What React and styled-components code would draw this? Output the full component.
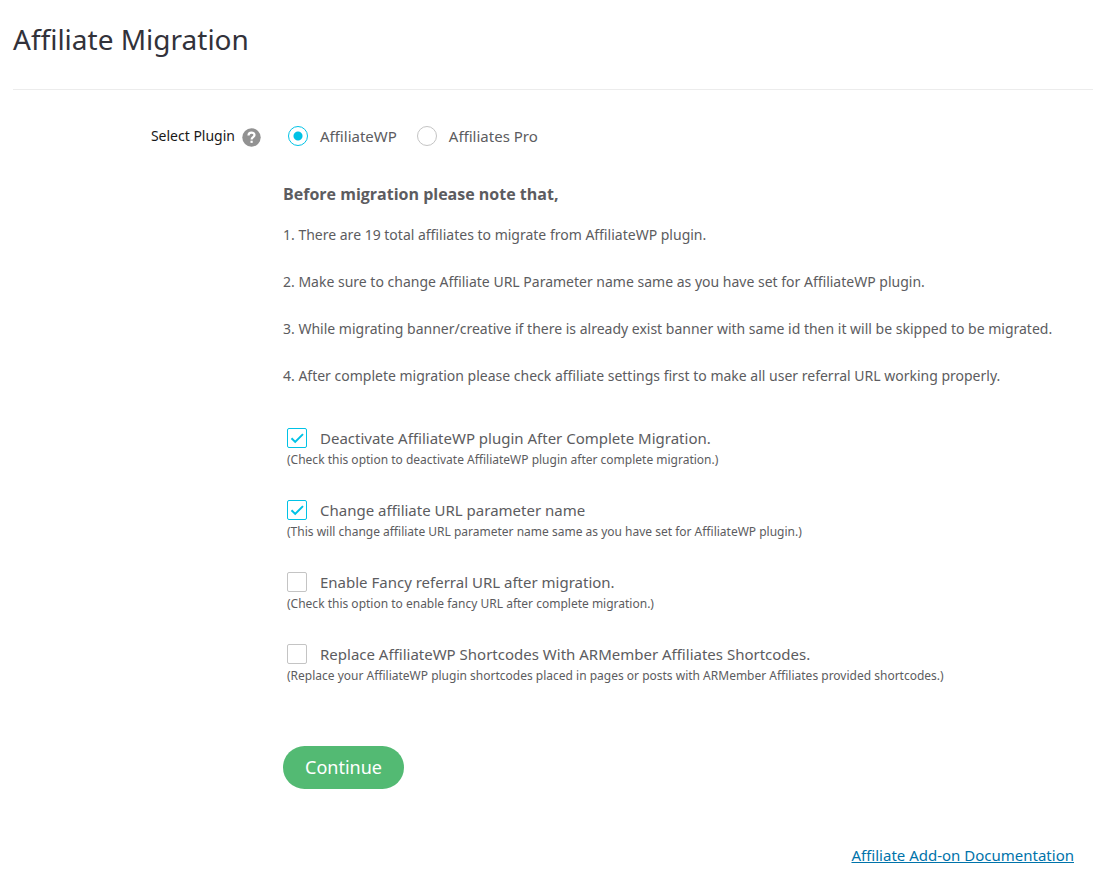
import React, { useState } from "react";
import styled, { createGlobalStyle } from "styled-components";

const GlobalStyle = createGlobalStyle`
  *, *::before, *::after { box-sizing: border-box; }
  body {
    margin: 0;
    background: #fff;
    color: #5c5c60;
    font-family: "Noto Sans", sans-serif;
    font-size: 14px;
  }
`;

const Page = styled.main`
  padding: 0 0 0 13px;
`;

const Header = styled.header`
  height: 90px;
  padding-top: 19px;
  border-bottom: 1px solid #ececec;
`;

const Title = styled.h1`
  margin: 0;
  color: #32323a;
  font-size: 28px;
  font-weight: 400;
  line-height: 40px;
`;

const Form = styled.form`
  display: grid;
  grid-template-columns: 248px 1fr;
  column-gap: 22px;
  padding-top: 32px;
`;

const FieldLabel = styled.div`
  display: flex;
  justify-content: flex-end;
  align-items: center;
  gap: 7px;
  height: 26px;
  color: #191818;
`;

const HelpIcon = styled.svg`
  width: 19px;
  height: 19px;
  margin-top: 4px;
`;

const Fields = styled.div`
  min-width: 0;
`;

const RadioGroup = styled.div`
  display: flex;
  align-items: center;
  gap: 20px;
  height: 28px;
  padding-left: 5px;
`;

const RadioLabel = styled.label`
  display: flex;
  align-items: center;
  gap: 12px;
  font-size: 15px;
  line-height: 28px;
`;

const Radio = styled.input`
  appearance: none;
  width: 20px;
  height: 20px;
  margin: 0;
  border: 1px solid #c4c4c4;
  border-radius: 50%;
  &:checked {
    border-color: #00c2e6;
    background: radial-gradient(circle, #00c2e6 4px, transparent 5px);
  }
`;

const NoteTitle = styled.h2`
  margin: 30px 0 0;
  font-family: "Open Sans", sans-serif;
  font-size: 16px;
  font-weight: 700;
  line-height: 28px;
`;

const Notes = styled.div`
  display: grid;
  gap: 23px;
  margin-top: 15px;
`;

const Note = styled.p`
  margin: 0;
  line-height: 24px;
`;

const Options = styled.div`
  display: grid;
  gap: 28px;
  margin-top: 38px;
  padding-left: 4px;
`;

const Option = styled.div`
  display: grid;
`;

const OptionLabel = styled.label`
  display: flex;
  align-items: center;
  gap: 13px;
  font-size: 15px;
  line-height: 24px;
`;

const CheckBox = styled.span`
  display: grid;
  flex: none;
  width: 20px;
  height: 20px;
  > * { grid-area: 1 / 1; }
`;

const CheckInput = styled.input`
  appearance: none;
  width: 20px;
  height: 20px;
  margin: 0;
  border: 1px solid #c4c4c4;
  border-radius: 2px;
  &:checked { border-color: #00c2e6; }
`;

const Tick = styled.svg`
  width: 20px;
  height: 20px;
  pointer-events: none;
`;

const Hint = styled.span`
  font-size: 12px;
  line-height: 20px;
`;

const ContinueButton = styled.button`
  display: block;
  margin-top: 60px;
  padding: 0 22px;
  height: 43px;
  border: 0;
  border-radius: 22px;
  background: #53ba73;
  color: #fff;
  font: 400 18px/43px "Noto Sans", sans-serif;
`;

const Footer = styled.footer`
  display: flex;
  justify-content: flex-end;
  margin-top: 54px;
  padding-right: 19px;
`;

const DocLink = styled.a`
  color: #0073aa;
  font-size: 15px;
  line-height: 24px;
`;

const notes = [
  "1. There are 19 total affiliates to migrate from AffiliateWP plugin.",
  "2. Make sure to change Affiliate URL Parameter name same as you have set for AffiliateWP plugin.",
  "3. While migrating banner/creative if there is already exist banner with same id then it will be skipped to be migrated.",
  "4. After complete migration please check affiliate settings first to make all user referral URL working properly.",
];

const options = [
  { id: "deactivate", label: "Deactivate AffiliateWP plugin After Complete Migration.", hint: "(Check this option to deactivate AffiliateWP plugin after complete migration.)", on: true },
  { id: "parameter", label: "Change affiliate URL parameter name", hint: "(This will change affiliate URL parameter name same as you have set for AffiliateWP plugin.)", on: true },
  { id: "fancy", label: "Enable Fancy referral URL after migration.", hint: "(Check this option to enable fancy URL after complete migration.)", on: false },
  { id: "shortcodes", label: "Replace AffiliateWP Shortcodes With ARMember Affiliates Shortcodes.", hint: "(Replace your AffiliateWP plugin shortcodes placed in pages or posts with ARMember Affiliates provided shortcodes.)", on: false },
];

function MigrationOption({ id, label, hint, on }) {
  const [checked, setChecked] = useState(on);
  return (
    <Option>
      <OptionLabel htmlFor={id}>
        <CheckBox>
          <CheckInput id={id} type="checkbox" checked={checked} aria-describedby={id + "-hint"} onChange={(e) => setChecked(e.target.checked)} />
          {checked && (
            <Tick viewBox="0 0 20 20" aria-hidden="true">
              <path d="M4.5 10.3l3.7 3.6 7.8-7.8" fill="none" stroke="#00c2e6" strokeWidth="2" />
            </Tick>
          )}
        </CheckBox>
        {label}
      </OptionLabel>
      <Hint id={id + "-hint"}>{hint}</Hint>
    </Option>
  );
}

export default function App() {
  const [plugin, setPlugin] = useState("AffiliateWP");
  return (
    <>
      <GlobalStyle />
      <Page>
        <Header>
          <Title>Affiliate Migration</Title>
        </Header>
        <Form onSubmit={(e) => e.preventDefault()}>
          <FieldLabel>
            <span id="plugin-label">Select Plugin</span>
            <HelpIcon viewBox="0 0 19 19" aria-hidden="true">
              <circle cx="9.5" cy="9.5" r="9.2" fill="#929292" />
              <path d="M6.5 7.4C6.5 3.7 12.5 3.7 12.5 7.1C12.5 9.1 9.6 9.2 9.6 11.5" fill="none" stroke="#fff" strokeWidth="2.2" />
              <rect x="8.5" y="12.7" width="2.2" height="2.2" fill="#fff" />
            </HelpIcon>
          </FieldLabel>
          <Fields>
            <RadioGroup role="radiogroup" aria-labelledby="plugin-label">
              {["AffiliateWP", "Affiliates Pro"].map((name) => (
                <RadioLabel key={name}>
                  <Radio type="radio" name="plugin" checked={plugin === name} onChange={() => setPlugin(name)} />
                  {name}
                </RadioLabel>
              ))}
            </RadioGroup>
            <NoteTitle>Before migration please note that,</NoteTitle>
            <Notes>
              {notes.map((text) => <Note key={text}>{text}</Note>)}
            </Notes>
            <Options>
              {options.map((o) => <MigrationOption key={o.id} {...o} />)}
            </Options>
            <ContinueButton type="submit">Continue</ContinueButton>
          </Fields>
        </Form>
        <Footer>
          <DocLink href="#documentation">Affiliate Add-on Documentation</DocLink>
        </Footer>
      </Page>
    </>
  );
}
